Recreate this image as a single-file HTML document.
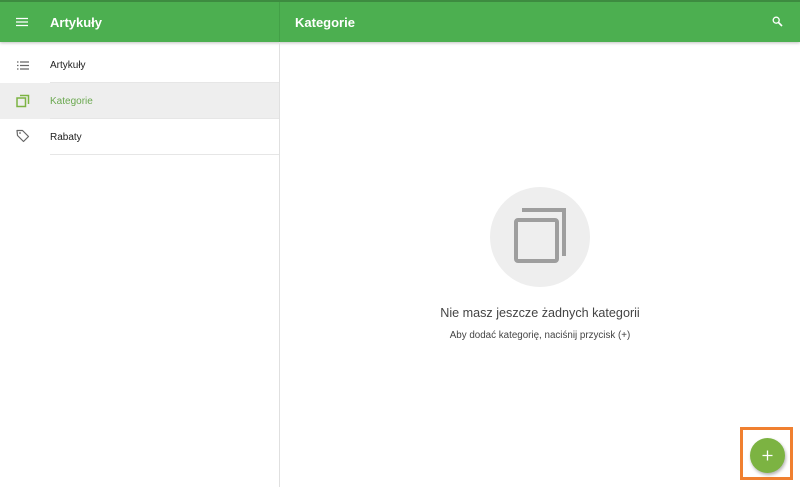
<!DOCTYPE html><html><head><style>
body{margin:0;width:800px;height:487px;overflow:hidden;background:#fff;font-family:"Liberation Sans",sans-serif;position:relative}
.top{position:absolute;left:0;top:0;width:800px;height:42px;background:#4caf50;border-top:2px solid #3d8b40;box-sizing:border-box;box-shadow:0 1px 3px rgba(0,0,0,.25)}
.div{position:absolute;left:279px;top:2px;width:1px;height:40px;background:#43a047}
.t{position:absolute;color:#fff;font-weight:bold;font-size:13px}
.side{position:absolute;left:279px;top:42px;width:1px;height:445px;background:#e0e0e0}
.item{position:absolute;left:0;width:279px;height:36px;font-size:10px;color:#222}
.item span{position:absolute;left:50px;top:13px}
.line{position:absolute;left:50px;right:0;bottom:0;height:1px;background:#e6e6e6}
</style></head><body>
<div class="top"></div><div class="div"></div>
<svg style="position:absolute;left:16px;top:17px" width="12" height="10"><path d="M0 1.5H12M0 5H12M0 8.5H12" stroke="#fff" stroke-width="1.3"/></svg>
<div class="t" style="left:50px;top:15px">Artykuły</div>
<div class="t" style="left:295px;top:15px">Kategorie</div>
<svg style="position:absolute;left:772px;top:16px" width="11" height="11"><circle cx="4.2" cy="4.2" r="3" fill="none" stroke="#fff" stroke-width="1.3"/><path d="M6.5 6.5L10 10" stroke="#fff" stroke-width="1.6"/></svg>
<div class="side"></div>
<div class="item" style="top:47px"><svg style="position:absolute;left:17px;top:14px" width="12" height="9"><path d="M0 1H1.5M3 1H12M0 4.5H1.5M3 4.5H12M0 8H1.5M3 8H12" stroke="#666" stroke-width="1.2"/></svg><span>Artykuły</span><div class="line"></div></div>
<div class="item" style="top:83px;background:#eee;color:#6aa84f"><svg style="position:absolute;left:16px;top:11px" width="14" height="14"><path d="M4 1.5H12.5V10" fill="none" stroke="#7cb342" stroke-width="1.5"/><rect x="1" y="4" width="8.5" height="8.5" fill="none" stroke="#7cb342" stroke-width="1.5"/></svg><span>Kategorie</span><div class="line"></div></div>
<div class="item" style="top:119px"><svg style="position:absolute;left:16px;top:10px" width="14" height="14"><path d="M1 1.5H6.5L12.5 7.5L7.5 12.5L1.5 6.5Z" fill="none" stroke="#666" stroke-width="1.2" stroke-linejoin="round"/><circle cx="4" cy="4" r="0.9" fill="#666"/></svg><span>Rabaty</span><div class="line"></div></div>
<div style="position:absolute;left:490px;top:187px;width:100px;height:100px;border-radius:50%;background:#eee"></div>
<svg style="position:absolute;left:490px;top:187px" width="100" height="100"><path d="M32 23H74V69" fill="none" stroke="#9e9e9e" stroke-width="4"/><rect x="26" y="33" width="41" height="41" rx="2" fill="none" stroke="#9e9e9e" stroke-width="4"/></svg>
<div style="position:absolute;left:280px;width:520px;top:306px;text-align:center;font-size:12.6px;color:#444">Nie masz jeszcze żadnych kategorii</div>
<div style="position:absolute;left:280px;width:520px;top:330px;text-align:center;font-size:9.8px;color:#444">Aby dodać kategorię, naciśnij przycisk (+)</div>
<div style="position:absolute;left:740px;top:427px;width:47px;height:47px;border:3px solid #f08030"></div>
<div style="position:absolute;left:750px;top:438px;width:35px;height:35px;border-radius:50%;background:#7cb342;box-shadow:1px 2px 3px rgba(0,0,0,.3)"></div>
<svg style="position:absolute;left:762px;top:450px" width="11" height="11"><path d="M5.5 0.5V10.5M0.5 5.5H10.5" stroke="#fff" stroke-width="1.3"/></svg>
</body></html>
